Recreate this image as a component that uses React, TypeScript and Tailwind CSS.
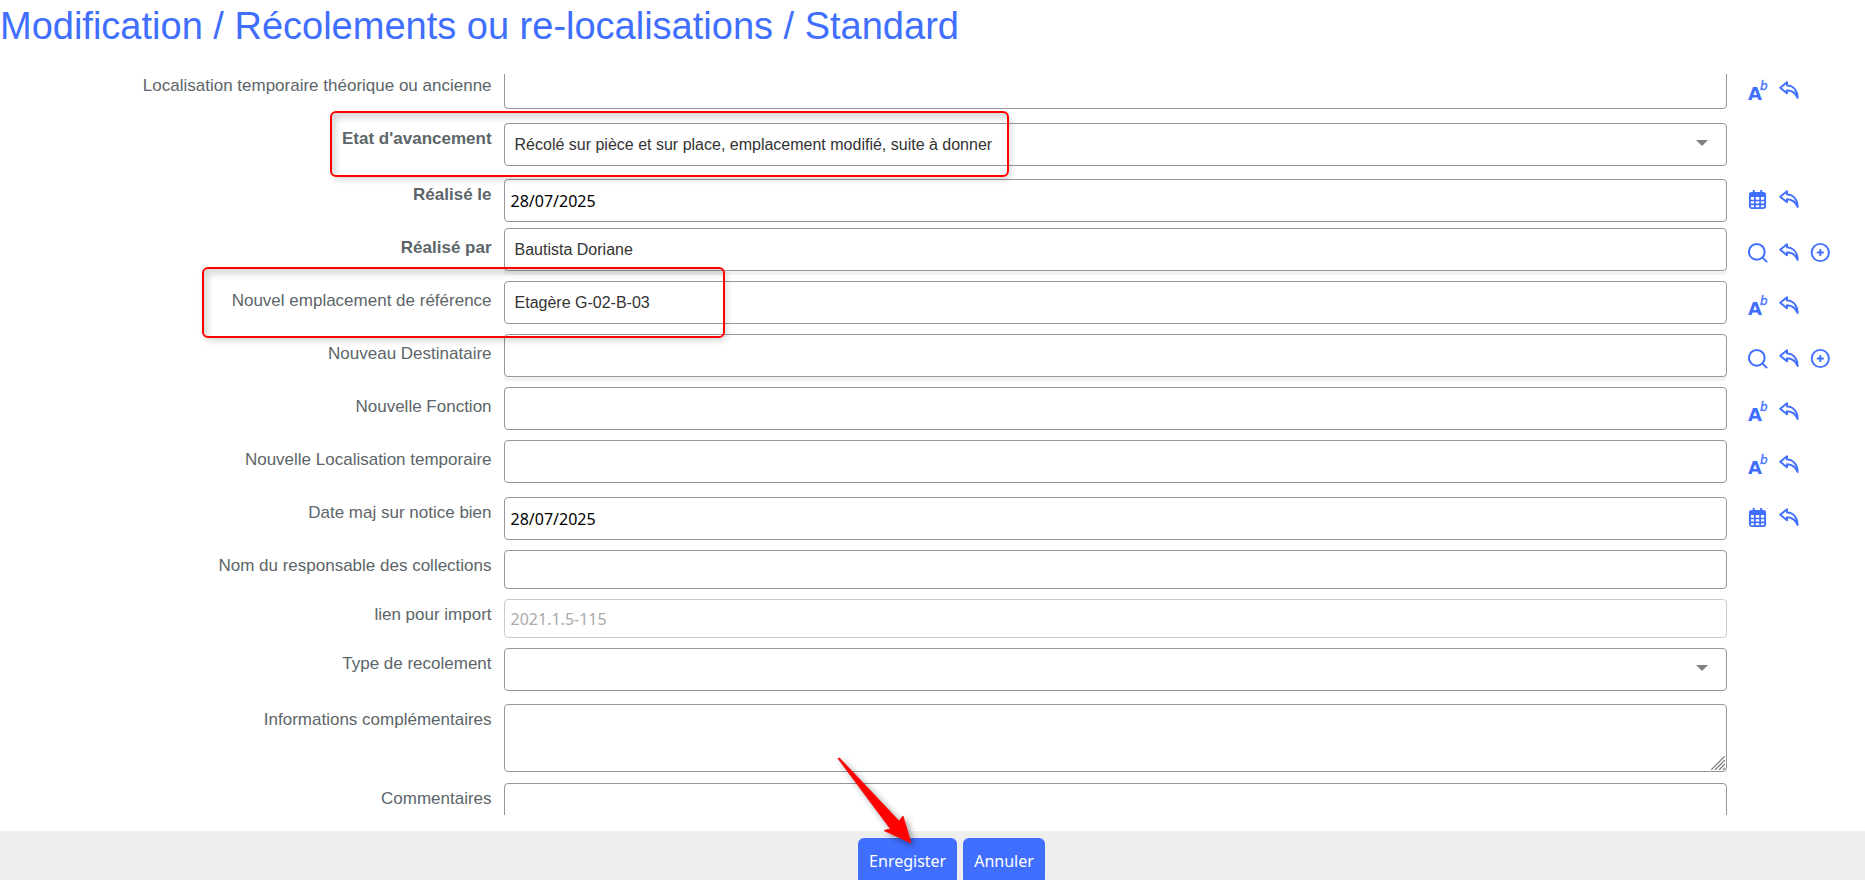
import { useId, useState } from "react"
import type { ReactNode } from "react"

type Tool = "text" | "calendar" | "search" | "undo" | "add"

const toolLabels: Record<Tool, string> = {
  text: "Thésaurus",
  calendar: "Calendrier",
  search: "Rechercher",
  undo: "Rétablir",
  add: "Ajouter",
}

function ToolIcon({ tool }: { tool: Tool }) {
  const props = { viewBox: "0 0 20 20", fill: "none", stroke: "currentColor", className: "block h-5 w-5 overflow-visible" }

  switch (tool) {
    case "text":
      return (
        <svg {...props} stroke="none" fill="currentColor">
          <text x="0" y="19" fontSize="18" fontWeight="700" fontFamily="DejaVu Sans, sans-serif">
            A
          </text>
          <text x="12" y="9" fontSize="12" fontStyle="italic" fontFamily="DejaVu Sans, sans-serif" stroke="currentColor" strokeWidth="0.3">
            b
          </text>
        </svg>
      )
    case "calendar":
      return (
        <svg {...props}>
          <path d="M5.8 0v4M13.2 0v4" strokeWidth="2" />
          <rect x="1.9" y="2.9" width="15.2" height="15.2" rx="1.8" strokeWidth="1.9" />
          <path d="M1.5 3h16v4h-16z" fill="currentColor" stroke="none" />
          <path d="M1.5 10.5h16M1.5 14.3h16M6.9 6v12M12.1 6v12" strokeWidth="1.7" />
        </svg>
      )
    case "search":
      return (
        <svg {...props} strokeWidth="2">
          <circle cx="8.8" cy="8.8" r="7.9" />
          <path d="M14.4 14.4l4.7 4.7" />
        </svg>
      )
    case "undo":
      return (
        <svg {...props} strokeWidth="1.9" strokeLinejoin="round">
          <path d="M1.2 6.7L8 1.2v3.2c6 .4 10.600 4.500 10.600 12.600C16.800 12 13.500 9.400 8 9.200V12.200z" />
        </svg>
      )
    case "add":
      return (
        <svg {...props} strokeWidth="1.9">
          <circle cx="10.300" cy="9.500" r="8.600" />
          <path d="M6.800 9.500h7M10.300 6v7" />
        </svg>
      )
  }
}

interface RowProps {
  id: string
  label: string
  bold?: boolean
  lookup?: boolean
  tools?: Tool[]
  className: string
  children: ReactNode
}

function Row({ id, label, bold, lookup, tools = [], className, children }: RowProps) {
  return (
    <div className={`flex items-start ${className}`}>
      <label
        htmlFor={id}
        className={`w-[27%] shrink-0 pt-2.5 pr-3 text-right text-[17px] leading-5 text-[#5c6569] ${bold ? "font-bold" : ""}`}
      >
        {label}
      </label>
      <div className={`relative min-w-0 flex-1 ${lookup ? "" : "pt-1"}`}>{children}</div>
      <div className="flex w-[138px] shrink-0 gap-[11px] pt-[15px] pl-[21px]">
        {tools.map((tool) => (
          <button key={tool} type="button" aria-label={toolLabels[tool]} className="h-5 w-5 cursor-pointer text-[#406eff]">
            <ToolIcon tool={tool} />
          </button>
        ))}
      </div>
    </div>
  )
}

const boxClass = "block w-full rounded border border-[#979797] bg-white outline-none focus:border-[#406eff]"

interface FieldProps {
  label: string
  value?: string
  bold?: boolean
  tools?: Tool[]
  shadow?: boolean
  disabled?: boolean
  children?: ReactNode
}

function LookupField({ label, value = "", bold, tools, shadow, children }: FieldProps) {
  const id = useId()
  const [text, setText] = useState(value)

  return (
    <Row id={id} label={label} bold={bold} lookup tools={tools} className="pb-2.5">
      <input
        id={id}
        type="text"
        value={text}
        onChange={(e) => setText(e.target.value)}
        className={`${boxClass} h-[43px] px-2.5 text-base text-[#333333] ${shadow ? "shadow-[0_4px_0_#f2f2f2]" : ""}`}
      />
      {children}
    </Row>
  )
}

function TextField({ label, value = "", bold, tools, disabled }: FieldProps) {
  const id = useId()
  const [text, setText] = useState(value)

  return (
    <Row id={id} label={label} bold={bold} tools={tools} className="pb-1.5">
      <input
        id={id}
        type="text"
        value={text}
        disabled={disabled}
        onChange={(e) => setText(e.target.value)}
        className={`${boxClass} px-1.5 font-['Noto_Sans',sans-serif] text-base text-black disabled:border-[#cbcbcb] disabled:text-[#aaaaaa] ${
          tools ? "h-[43px]" : "h-[39px]"
        }`}
      />
    </Row>
  )
}

function SelectField({ label, value = "", bold, children }: FieldProps) {
  const id = useId()

  return (
    <Row id={id} label={label} bold={bold} className="pb-[9px]">
      <div className="relative">
        <select id={id} defaultValue={value} className={`${boxClass} h-[43px] appearance-none px-2.5 text-base text-[#333333]`}>
          <option value={value}>{value}</option>
        </select>
        <svg viewBox="0 0 12 6" className="pointer-events-none absolute top-[17px] right-[19px] h-1.5 w-3 text-[#808080]">
          <path d="M0 0h12L6 6z" fill="currentColor" />
        </svg>
      </div>
      {children}
    </Row>
  )
}

function TextAreaField({ label }: FieldProps) {
  const id = useId()

  return (
    <Row id={id} label={label} className="pb-[7px]">
      <div className="relative">
        <textarea id={id} className={`${boxClass} h-[68px] resize-none px-1.5 py-1 text-base`} />
        <svg
          viewBox="0 0 14 14"
          className="pointer-events-none absolute right-0.5 bottom-0.5 h-3.5 w-3.5"
          stroke="#777777"
          strokeWidth="1.2"
        >
          <path d="M0 14L14 0M4 14L14 4M8 14l6-6M12 14l2-2" />
        </svg>
      </div>
    </Row>
  )
}

function Highlight({ className }: { className: string }) {
  return (
    <span
      className={`pointer-events-none absolute z-10 rounded-md border-2 border-[#ff0000] shadow-[2px_3px_6px_rgba(0,0,0,0.15),inset_4px_5px_6px_rgba(0,0,0,0.15)] ${className}`}
    />
  )
}

export default function App() {
  return (
    <div className="flex h-screen flex-col overflow-hidden bg-white font-['Liberation_Sans',Arial,sans-serif]">
      <h1 className="h-[74px] shrink-0 pt-1 text-[38px] leading-11 text-[#406eff]">
        Modification / Récolements ou re-localisations / Standard
      </h1>

      <form className="flex min-h-0 flex-1 flex-col" onSubmit={(e) => e.preventDefault()}>
        <div className="min-h-0 flex-1 overflow-hidden">
          <div className="-mt-2">
            <LookupField label="Localisation temporaire théorique ou ancienne" tools={["text", "undo"]} />
            <SelectField label="Etat d'avancement" bold value="Récolé sur pièce et sur place, emplacement modifié, suite à donner">
              <Highlight className="-top-2 -left-[174px] h-[66px] w-[679px]" />
            </SelectField>
            <TextField label="Réalisé le" bold value="28/07/2025" tools={["calendar", "undo"]} />
            <LookupField label="Réalisé par" bold value="Bautista Doriane" tools={["search", "undo", "add"]} shadow />
            <LookupField label="Nouvel emplacement de référence" value="Etagère G-02-B-03" tools={["text", "undo"]}>
              <Highlight className="-top-[14px] -left-[302px] h-[71px] w-[523px]" />
            </LookupField>
            <LookupField label="Nouveau Destinataire" tools={["search", "undo", "add"]} shadow />
            <LookupField label="Nouvelle Fonction" tools={["text", "undo"]} />
            <LookupField label="Nouvelle Localisation temporaire" tools={["text", "undo"]} />
            <TextField label="Date maj sur notice bien" value="28/07/2025" tools={["calendar", "undo"]} />
            <TextField label="Nom du responsable des collections" />
            <TextField label="lien pour import" value="2021.1.5-115" disabled />
            <SelectField label="Type de recolement" />
            <TextAreaField label="Informations complémentaires" />
            <TextAreaField label="Commentaires" />
          </div>
        </div>

        <div className="mt-4 flex h-[49px] shrink-0 items-start justify-center gap-1.5 bg-[#eeeeee] pt-[7px] pl-[38px] font-['Noto_Sans',sans-serif] text-base text-white">
          <div className="relative">
            <button type="submit" className="h-[46px] cursor-pointer rounded-md bg-[#406eff] px-[11px]">
              Enregister
            </button>
            <svg
              viewBox="0 0 74 86"
              className="pointer-events-none absolute -top-20 -left-5 z-10 h-[86px] w-[74px] overflow-visible drop-shadow-[3px_3px_3px_rgba(0,0,0,0.4)]"
            >
              <path d="M0 0.500L1.500 0L61 63L65 58L73 85L46 72.500L52.500 71z" fill="#ff0000" stroke="#ff0000" strokeWidth="0.800" />
            </svg>
          </div>
          <button type="button" className="h-[46px] cursor-pointer rounded-md bg-[#406eff] px-[11px]">
            Annuler
          </button>
        </div>
      </form>
    </div>
  )
}
